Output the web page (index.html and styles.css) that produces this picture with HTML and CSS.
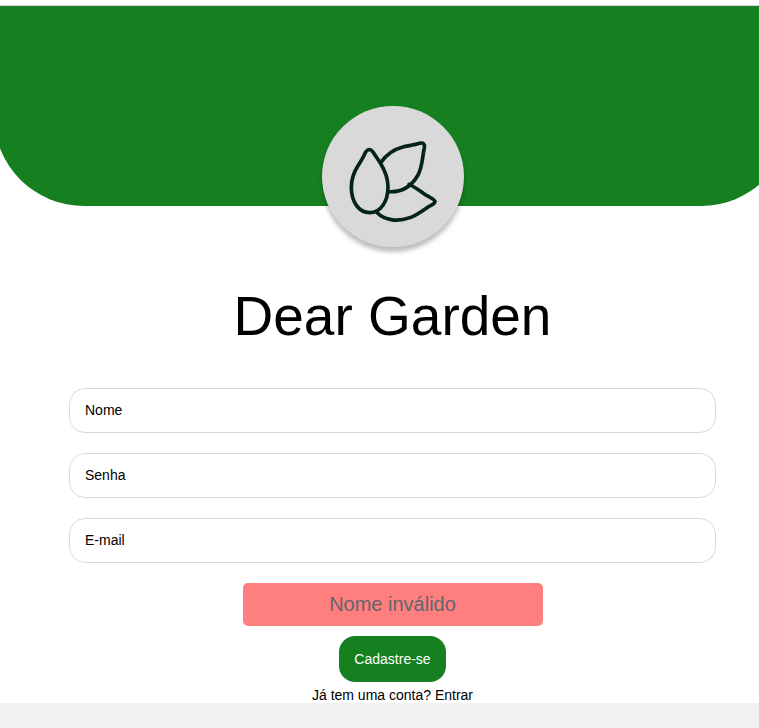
FILE: index.html
```html
<!DOCTYPE html>
<html lang="pt-BR">
<head>
<meta charset="utf-8">
<title>Dear Garden</title>
<link rel="stylesheet" href="styles.css">
</head>
<body>
<main class="page">
  <header class="banner">
    <div class="logo">
      <svg class="logo-icon" viewBox="36 33 426 423" fill="none" stroke="#032416" stroke-width="11" stroke-linejoin="round" stroke-linecap="round">
        <path d="M167 171Q178 156 189 171L211 204C226 228 234 249 234 277C234 321 211 353 179 353C146 353 124 320 124 277C124 251 130 235 143 214C152 200 160 187 167 171Z"/>
        <path d="M212 203C228 180 251 163 279 156C298 152 316 149 329 145C340 142 345 147 343 158C337 187 337 218 324 240C306 272 276 293 234 290"/>
        <path d="M297 268C314 275 333 290 351 302C363 309 374 314 375 319C376 327 365 329 356 335C337 347 321 361 299 368C266 381 225 378 200 352"/>
      </svg>
    </div>
  </header>
  <h1 class="title">Dear Garden</h1>
  <form class="form">
    <input class="field" type="text" placeholder="Nome" aria-label="Nome">
    <input class="field" type="password" placeholder="Senha" aria-label="Senha">
    <input class="field" type="email" placeholder="E-mail" aria-label="E-mail">
    <p class="error">Nome inválido</p>
    <button class="submit" type="button">Cadastre-se</button>
    <p class="login">Já tem uma conta? <a class="login-link" href="#">Entrar</a></p>
  </form>
</main>
</body>
</html>
```
FILE: styles.css
```css
* {
  box-sizing: border-box;
}

html,
body {
  margin: 0;
  overflow: hidden;
  background: #f1f1f1;
}

body {
  font-family: "Liberation Sans", Arial, sans-serif;
  font-size: 14px;
  color: #000;
}

.page {
  display: flex;
  flex-direction: column;
  align-items: center;
  width: 785px;
  height: 703px;
  padding-top: 5px;
  background: #fff;
}

.banner {
  display: flex;
  flex: none;
  justify-content: center;
  align-items: flex-start;
  width: 797px;
  height: 201px;
  padding-top: 100px;
  border-top: 1px solid #d9d9d9;
  border-radius: 0 0 90px 90px;
  background: #167f1f;
}

.logo {
  flex: none;
  width: 142px;
  height: 141px;
  border-radius: 50%;
  background: #d9d9d9;
  box-shadow: 0 5px 4px rgba(0, 0, 0, 0.25);
}

.logo-icon {
  display: block;
  width: 142px;
  height: 141px;
}

.title {
  margin: 78px 0 0;
  font-size: 55px;
  font-weight: 400;
  line-height: 64px;
}

.form {
  display: flex;
  flex-direction: column;
  align-items: center;
  width: 647px;
  margin-top: 40px;
}

.field {
  width: 100%;
  height: 45px;
  margin-bottom: 20px;
  padding: 0 15px 2px;
  border: 1px solid #d9d9d9;
  border-radius: 16px;
  background: #fff;
  font: inherit;
}

.field::placeholder {
  color: #000;
  opacity: 1;
}

.error {
  width: 300px;
  height: 43px;
  margin: 0 0 10px;
  border-radius: 5px;
  background: #ff7f7f;
  color: #60666c;
  font-size: 20px;
  line-height: 43px;
  text-align: center;
}

.submit {
  width: 107px;
  height: 46px;
  padding: 0;
  border: 0;
  border-radius: 16px;
  background: #167f1f;
  color: #fff;
  font: inherit;
}

.login {
  margin: 5px 0 0;
  line-height: 16px;
}

.login-link {
  color: inherit;
  text-decoration: none;
}
```
